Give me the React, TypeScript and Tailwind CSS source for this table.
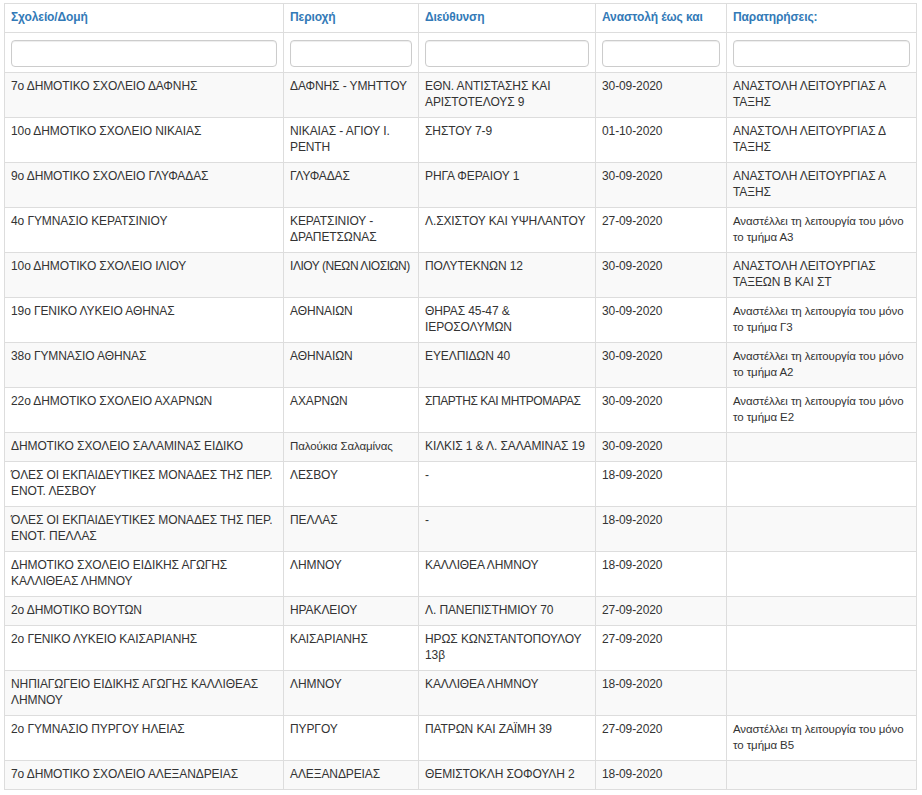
const COLUMNS = [
  { label: "Σχολείο/Δομή", width: "w-[279px]" },
  { label: "Περιοχή", width: "w-[135px]" },
  { label: "Διεύθυνση", width: "w-[177px]" },
  { label: "Αναστολή έως και", width: "w-[131px]" },
  { label: "Παρατηρήσεις:", width: "w-[190px]" },
];

type Row = [string, string, string, string, string];

const ROWS: Row[] = [
  ["7ο ΔΗΜΟΤΙΚΟ ΣΧΟΛΕΙΟ ΔΑΦΝΗΣ", "ΔΑΦΝΗΣ - ΥΜΗΤΤΟΥ", "ΕΘΝ. ΑΝΤΙΣΤΑΣΗΣ ΚΑΙ ΑΡΙΣΤΟΤΕΛΟΥΣ 9", "30-09-2020", "ΑΝΑΣΤΟΛΗ ΛΕΙΤΟΥΡΓΙΑΣ Α ΤΑΞΗΣ"],
  ["10ο ΔΗΜΟΤΙΚΟ ΣΧΟΛΕΙΟ ΝΙΚΑΙΑΣ", "ΝΙΚΑΙΑΣ - ΑΓΙΟΥ Ι. ΡΕΝΤΗ", "ΣΗΣΤΟΥ 7-9", "01-10-2020", "ΑΝΑΣΤΟΛΗ ΛΕΙΤΟΥΡΓΙΑΣ Δ ΤΑΞΗΣ"],
  ["9ο ΔΗΜΟΤΙΚΟ ΣΧΟΛΕΙΟ ΓΛΥΦΑΔΑΣ", "ΓΛΥΦΑΔΑΣ", "ΡΗΓΑ ΦΕΡΑΙΟΥ 1", "30-09-2020", "ΑΝΑΣΤΟΛΗ ΛΕΙΤΟΥΡΓΙΑΣ Α ΤΑΞΗΣ"],
  ["4ο ΓΥΜΝΑΣΙΟ ΚΕΡΑΤΣΙΝΙΟΥ", "ΚΕΡΑΤΣΙΝΙΟΥ - ΔΡΑΠΕΤΣΩΝΑΣ", "Λ.ΣΧΙΣΤΟΥ ΚΑΙ ΥΨΗΛΑΝΤΟΥ", "27-09-2020", "Αναστέλλει τη λειτουργία του μόνο το τμήμα Α3"],
  ["10ο ΔΗΜΟΤΙΚΟ ΣΧΟΛΕΙΟ ΙΛΙΟΥ", "ΙΛΙΟΥ (ΝΕΩΝ ΛΙΟΣΙΩΝ)", "ΠΟΛΥΤΕΚΝΩΝ 12", "30-09-2020", "ΑΝΑΣΤΟΛΗ ΛΕΙΤΟΥΡΓΙΑΣ ΤΑΞΕΩΝ Β ΚΑΙ ΣΤ"],
  ["19ο ΓΕΝΙΚΟ ΛΥΚΕΙΟ ΑΘΗΝΑΣ", "ΑΘΗΝΑΙΩΝ", "ΘΗΡΑΣ 45-47 & ΙΕΡΟΣΟΛΥΜΩΝ", "30-09-2020", "Αναστέλλει τη λειτουργία του μόνο το τμήμα Γ3"],
  ["38ο ΓΥΜΝΑΣΙΟ ΑΘΗΝΑΣ", "ΑΘΗΝΑΙΩΝ", "ΕΥΕΛΠΙΔΩΝ 40", "30-09-2020", "Αναστέλλει τη λειτουργία του μόνο το τμήμα Α2"],
  ["22ο ΔΗΜΟΤΙΚΟ ΣΧΟΛΕΙΟ ΑΧΑΡΝΩΝ", "ΑΧΑΡΝΩΝ", "ΣΠΑΡΤΗΣ ΚΑΙ ΜΗΤΡΟΜΑΡΑΣ", "30-09-2020", "Αναστέλλει τη λειτουργία του μόνο το τμήμα Ε2"],
  ["ΔΗΜΟΤΙΚΟ ΣΧΟΛΕΙΟ ΣΑΛΑΜΙΝΑΣ ΕΙΔΙΚΟ", "Παλούκια Σαλαμίνας", "ΚΙΛΚΙΣ 1 & Λ. ΣΑΛΑΜΙΝΑΣ 19", "30-09-2020", ""],
  ["ΌΛΕΣ ΟΙ ΕΚΠΑΙΔΕΥΤΙΚΕΣ ΜΟΝΑΔΕΣ ΤΗΣ ΠΕΡ. ΕΝΟΤ. ΛΕΣΒΟΥ", "ΛΕΣΒΟΥ", "-", "18-09-2020", ""],
  ["ΌΛΕΣ ΟΙ ΕΚΠΑΙΔΕΥΤΙΚΕΣ ΜΟΝΑΔΕΣ ΤΗΣ ΠΕΡ. ΕΝΟΤ. ΠΕΛΛΑΣ", "ΠΕΛΛΑΣ", "-", "18-09-2020", ""],
  ["ΔΗΜΟΤΙΚΟ ΣΧΟΛΕΙΟ ΕΙΔΙΚΗΣ ΑΓΩΓΗΣ ΚΑΛΛΙΘΕΑΣ ΛΗΜΝΟΥ", "ΛΗΜΝΟΥ", "ΚΑΛΛΙΘΕΑ ΛΗΜΝΟΥ", "18-09-2020", ""],
  ["2ο ΔΗΜΟΤΙΚΟ ΒΟΥΤΩΝ", "ΗΡΑΚΛΕΙΟΥ", "Λ. ΠΑΝΕΠΙΣΤΗΜΙΟΥ 70", "27-09-2020", ""],
  ["2ο ΓΕΝΙΚΟ ΛΥΚΕΙΟ ΚΑΙΣΑΡΙΑΝΗΣ", "ΚΑΙΣΑΡΙΑΝΗΣ", "ΗΡΩΣ ΚΩΝΣΤΑΝΤΟΠΟΥΛΟΥ 13β", "27-09-2020", ""],
  ["ΝΗΠΙΑΓΩΓΕΙΟ ΕΙΔΙΚΗΣ ΑΓΩΓΗΣ ΚΑΛΛΙΘΕΑΣ ΛΗΜΝΟΥ", "ΛΗΜΝΟΥ", "ΚΑΛΛΙΘΕΑ ΛΗΜΝΟΥ", "18-09-2020", ""],
  ["2ο ΓΥΜΝΑΣΙΟ ΠΥΡΓΟΥ ΗΛΕΙΑΣ", "ΠΥΡΓΟΥ", "ΠΑΤΡΩΝ ΚΑΙ ΖΑΪΜΗ 39", "27-09-2020", "Αναστέλλει τη λειτουργία του μόνο το τμήμα Β5"],
  ["7ο ΔΗΜΟΤΙΚΟ ΣΧΟΛΕΙΟ ΑΛΕΞΑΝΔΡΕΙΑΣ", "ΑΛΕΞΑΝΔΡΕΙΑΣ", "ΘΕΜΙΣΤΟΚΛΗ ΣΟΦΟΥΛΗ 2", "18-09-2020", ""],
];

// mixed-case Greek renders narrower in the original, so it gets a smaller size
const TIGHT = new Set(["ΙΛΙΟΥ (ΝΕΩΝ ΛΙΟΣΙΩΝ)", "ΣΠΑΡΤΗΣ ΚΑΙ ΜΗΤΡΟΜΑΡΑΣ"]);

function cellText(cell: string) {
  const lower = (cell.match(/[α-ωάέήίόύώϊϋ]/g) ?? []).length;
  if (lower >= 3) return "text-[11.5px]";
  if (TIGHT.has(cell)) return "tracking-[-0.45px]";
  return "";
}

export default function App() {
  return (
    <div className="min-h-screen bg-white pt-[3px] pl-[4px] font-['Liberation_Sans',Arial,sans-serif] text-[12px] leading-[16px] tracking-[-0.1px] text-[#333]">
      <table className="w-[912px] table-fixed border-collapse border border-[#ddd]">
        <colgroup>
          {COLUMNS.map((c) => (
            <col key={c.label} className={c.width} />
          ))}
        </colgroup>
        <thead>
          <tr>
            {COLUMNS.map((c) => (
              <th
                key={c.label}
                className="border border-[#ddd] px-[6px] pt-[5px] pb-[7px] text-left align-top font-bold text-[#337ab7]"
              >
                {c.label}
              </th>
            ))}
          </tr>
          <tr>
            {COLUMNS.map((c) => (
              <th key={c.label} className="border border-[#ddd] px-[6px] pt-[7px] pb-[5px]">
                <input
                  type="text"
                  className="block h-[27px] w-full rounded-[4px] border border-[#ccc] bg-white px-2 text-[12px] shadow-[inset_0_1px_1px_rgba(0,0,0,0.075)] outline-none"
                />
              </th>
            ))}
          </tr>
        </thead>
        <tbody>
          {ROWS.map((row, i) => (
            <tr key={i} className={i % 2 === 0 ? "bg-[#f9f9f9]" : "bg-white"}>
              {row.map((cell, j) => (
                <td key={j} className="border border-[#ddd] px-[6px] pt-[5px] pb-[7px] align-top">
                  <span className={cellText(cell)}>{cell}</span>
                </td>
              ))}
            </tr>
          ))}
        </tbody>
      </table>
    </div>
  );
}
